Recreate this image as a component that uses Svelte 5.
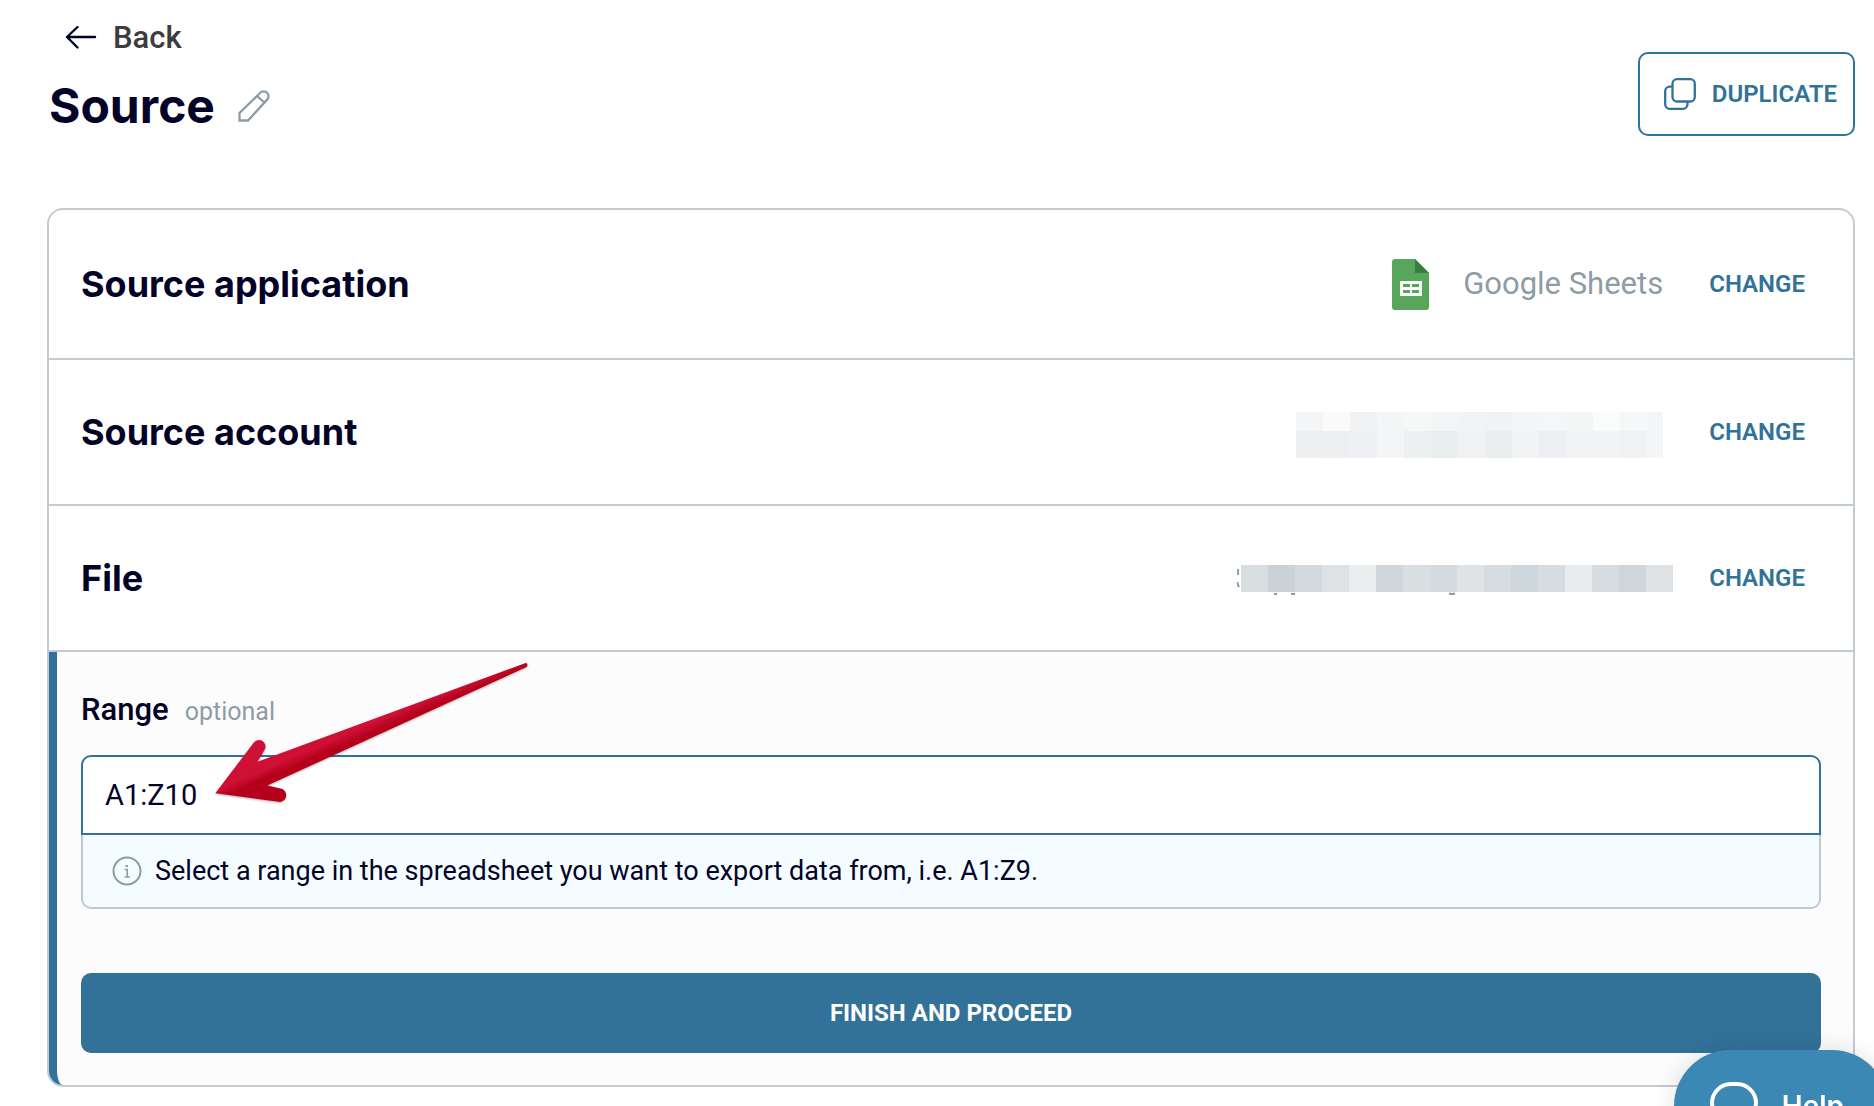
<script>
  let range = 'A1:Z10';

  // colour blocks that cover the private account and file names
  const cell = 27;
  const accountTop = ['#f4f5f7', '#fafafa', '#f1f2f4', '#f4f5f7', '#f6f8f7', '#f4f5f7', '#f2f3f5', '#f1f2f4', '#f4f5f7', '#f5f6f8', '#f4f6f5', '#fafcfb', '#f6f7f9', '#f4f5f7'];
  const accountBottom = ['#edeff1', '#edeef0', '#eff0f3', '#f4f5f7', '#ecf0f0', '#e9eeef', '#f0f1f3', '#eaeeef', '#f2f3f5', '#eeeff2', '#f3f4f6', '#f3f4f6', '#f0f1f3', '#f4f5f7'];
  const fileCells = ['#d9dee1', '#cad2d6', '#d4d9dd', '#dee2e5', '#eaeeef', '#d1d6db', '#d9dee1', '#d4dade', '#dfe3e6', '#d7dce0', '#cdd6da', '#d7dce0', '#e8ecef', '#d7dce0', '#d0d5d9', '#dee2e5'];
</script>

<div class="page">
  <header class="header">
    <div class="heading">
      <a class="back" href="#back">
        <svg width="32" height="24" viewBox="0 0 32 24" fill="none" stroke="#030328" stroke-width="2.4" stroke-linecap="round" stroke-linejoin="round" aria-hidden="true">
          <path d="M30 11H2M12.500 1L2 11l10.500 10.500"/>
        </svg>
        <span>Back</span>
      </a>
      <div class="title-row">
        <h1>Source</h1>
        <button class="edit" aria-label="Edit name">
          <svg width="32" height="32" viewBox="0 0 32 32" fill="none" stroke="#8d9ca5" stroke-width="2.3" aria-hidden="true">
            <path d="M1.500 30.500V23L22.300 2.800a4.800 4.800 0 0 1 6.800 0a4.800 4.800 0 0 1 0 6.800L10 30.500z"/>
            <path d="M19 6l7.800 6.800"/>
          </svg>
        </button>
      </div>
    </div>
    <button class="duplicate">
      <svg width="32" height="32" viewBox="0 0 32 32" fill="none" stroke="currentColor" stroke-width="2.3" aria-hidden="true">
        <rect x="8.500" y="1.200" width="22.300" height="22.300" rx="4.500"/>
        <path d="M8.500 8.700H5.700a4.500 4.500 0 0 0-4.500 4.500v13.100a4.500 4.500 0 0 0 4.500 4.500H19a4.500 4.500 0 0 0 4.500-4.500v-2.800"/>
      </svg>
      <span>DUPLICATE</span>
    </button>
  </header>

  <main class="card">
    <section class="row first">
      <h2>Source application</h2>
      <div class="value">
        <svg class="sheets" width="37" height="51" viewBox="0 0 37 51" aria-hidden="true">
          <path fill="#58a65c" d="M3 0h20l14 14v34a3 3 0 0 1-3 3H3a3 3 0 0 1-3-3V3a3 3 0 0 1 3-3z"/>
          <path fill="#3c7d3f" d="M23 0l14 14H23z"/>
          <path fill="#fff" fill-rule="evenodd" d="M8 22h22v15H8zM11 25v3h7v-3zM20 25v3h7v-3zM11 31v3h7v-3zM20 31v3h7v-3z"/>
        </svg>
        <span class="name">Google Sheets</span>
        <button class="change">CHANGE</button>
      </div>
    </section>

    <section class="row">
      <h2>Source account</h2>
      <div class="value">
        <svg width="367" height="52" viewBox="0 -6 367 52" shape-rendering="crispEdges" role="img" aria-label="Hidden account name">
          {#each accountTop as color, i}
            <rect x={i * cell} y="0" width={cell} height="19" fill={color}/>
          {/each}
          {#each accountBottom as color, i}
            <rect x={i * cell} y="19" width={cell} height={cell} fill={color}/>
          {/each}
        </svg>
        <button class="change">CHANGE</button>
      </div>
    </section>

    <section class="row">
      <h2>File</h2>
      <div class="value file">
        <svg width="436" height="36" viewBox="0 -3 436 36" role="img" aria-label="Hidden file name">
          <g stroke="#8d9ca5" stroke-width="2" fill="none">
            <path d="M1.500 6q-1.500 3 0 6M0.500 19q0 3 1.500 5"/>
            <path d="M37 31h3M54 31h4M212 30.500q3 1 6 0"/>
          </g>
          {#each fileCells as color, i}
            <rect x={4 + i * cell} y="2" width={cell} height={cell} fill={color} shape-rendering="crispEdges"/>
          {/each}
        </svg>
        <button class="change">CHANGE</button>
      </div>
    </section>

    <section class="panel">
      <div class="label-row">
        <label for="range">Range</label>
        <span class="optional">optional</span>
      </div>
      <input id="range" type="text" aria-describedby="range-hint" bind:value={range}/>
      <div class="hint" id="range-hint">
        <svg width="30" height="30" viewBox="0 0 30 30" fill="none" stroke="#8d9ca5" stroke-width="2" aria-hidden="true">
          <circle cx="15" cy="15" r="13.500"/>
          <path stroke-width="1.600" d="M12.500 13.500h2.700v7M12.500 21h5.500"/>
          <path d="M13.500 10h2.500"/>
        </svg>
        <span>Select a range in the spreadsheet you want to export data from, i.e. A1:Z9.</span>
      </div>
      <button class="finish">FINISH AND PROCEED</button>

      <svg class="pointer" width="325" height="150" viewBox="0 0 325 150" aria-hidden="true">
        <defs>
          <linearGradient id="arrow-red" gradientUnits="userSpaceOnUse" x1="150" y1="60" x2="159" y2="81">
            <stop offset="0.350" stop-color="#ce1035"/>
            <stop offset="0.750" stop-color="#b5001c"/>
          </linearGradient>
        </defs>
        <path fill="url(#arrow-red)" d="M6.300 133.300L44.500 83A6.500 6.500 0 0 1 55.500 90L48.500 101.700L316 3.200Q318.500 2.700 318.500 5Q318.500 6.500 316.500 7.500L58.300 125.500L71.500 128.500A6.600 6.600 0 0 1 69.500 141.800z"/>
      </svg>
    </section>
  </main>
</div>

<button class="help">
  <svg width="48" height="48" viewBox="0 0 48 48" fill="none" stroke="#fff" stroke-width="4" aria-hidden="true">
    <path d="M21 2h6a19 19 0 0 1 19 19a18 18 0 0 1-18 18l-8 7v-7A18 18 0 0 1 2 21A19 19 0 0 1 21 2z"/>
  </svg>
  <span>Help</span>
</button>

<style>
  :global(body) {
    background: #fff;
    overflow: hidden;
  }
  .page {
    padding: 0 19px 19px 47px;
    font-family: Roboto, "Liberation Sans", sans-serif;
    color: #030328;
  }
  button {
    font-family: inherit;
    cursor: pointer;
  }
  h1,
  h2 {
    margin: 0;
    font-family: Inter, "Liberation Sans", sans-serif;
    font-weight: 700;
  }
  svg {
    flex-shrink: 0;
  }

  .header {
    display: flex;
    justify-content: space-between;
    align-items: flex-end;
    padding: 18px 0 72px;
  }
  .heading {
    display: flex;
    flex-direction: column;
    gap: 18px;
  }
  .back {
    display: flex;
    align-items: center;
    gap: 16px;
    padding-left: 18px;
    font-size: 31px;
    line-height: 40px;
    font-weight: 500;
    color: #3c3c3c;
    text-decoration: none;
  }
  .title-row {
    display: flex;
    align-items: center;
    gap: 23px;
    padding-left: 2px;
  }
  h1 {
    font-size: 48px;
    line-height: 60px;
  }
  .edit {
    display: flex;
    padding: 0;
    border: none;
    background: none;
  }
  .duplicate {
    display: flex;
    align-items: center;
    gap: 16px;
    height: 84px;
    padding: 0 16px 0 24px;
    border: 2px solid #327299;
    border-radius: 10px;
    background: #fff;
    color: #327299;
    font-size: 24px;
    font-weight: 600;
  }

  .card {
    border: 2px solid #c5ccd1;
    border-radius: 16px;
  }
  .row {
    display: flex;
    justify-content: space-between;
    align-items: center;
    min-height: 144px;
    padding: 0 32px;
    border-bottom: 2px solid #c5ccd1;
  }
  .row.first {
    min-height: 148px;
  }
  h2 {
    font-size: 36px;
    line-height: 44px;
  }
  .value {
    display: flex;
    align-items: center;
    gap: 30px;
  }
  .value.file {
    gap: 20px;
  }
  .name {
    padding-left: 4px;
    font-size: 31px;
    line-height: 40px;
    color: #8d9ca5;
  }
  .change {
    padding: 16px;
    border: none;
    background: none;
    color: #327299;
    font-size: 24px;
    font-weight: 600;
  }

  .panel {
    position: relative;
    padding: 36px 32px 32px 24px;
    border-left: 8px solid #327299;
    border-radius: 0 0 14px 14px;
    background: #fcfcfc;
  }
  .label-row {
    display: flex;
    align-items: baseline;
    gap: 16px;
    margin-bottom: 21px;
    line-height: 44px;
  }
  label {
    font-size: 31px;
    font-weight: 500;
  }
  .optional {
    font-size: 25px;
    color: #8d9ca5;
  }
  input {
    display: block;
    box-sizing: border-box;
    width: 100%;
    height: 80px;
    padding: 0 22px;
    border: 2px solid #327299;
    border-radius: 10px 10px 0 0;
    outline: none;
    background: #fff;
    color: inherit;
    font-family: inherit;
    font-size: 29px;
  }
  .hint {
    display: flex;
    align-items: center;
    gap: 13px;
    padding: 16px 29px;
    border: 2px solid #c0c9ce;
    border-top: none;
    border-radius: 0 0 10px 10px;
    background: #f4fcff;
    font-size: 27px;
    line-height: 40px;
  }
  .finish {
    display: block;
    width: 100%;
    height: 80px;
    margin-top: 64px;
    border: none;
    border-radius: 10px;
    background: #327299;
    color: #fff;
    font-size: 24px;
    font-weight: 700;
  }
  /* arrow drawn over the form, pointing at the range value */
  .pointer {
    position: absolute;
    left: 152px;
    top: 8px;
    filter: drop-shadow(0 1px 1px rgba(0, 0, 0, 0.3));
    pointer-events: none;
  }

  /* floating chat launcher, partly outside the window */
  .help {
    position: fixed;
    right: -14px;
    bottom: -56px;
    display: flex;
    align-items: center;
    gap: 24px;
    height: 112px;
    padding: 0 44px 0 36px;
    border: none;
    border-radius: 56px;
    background: #3b88b5;
    box-shadow: 0 0 24px rgba(0, 0, 0, 0.12);
    color: #fff;
    font-family: Inter, "Liberation Sans", sans-serif;
    font-size: 28px;
    font-weight: 600;
  }
</style>
